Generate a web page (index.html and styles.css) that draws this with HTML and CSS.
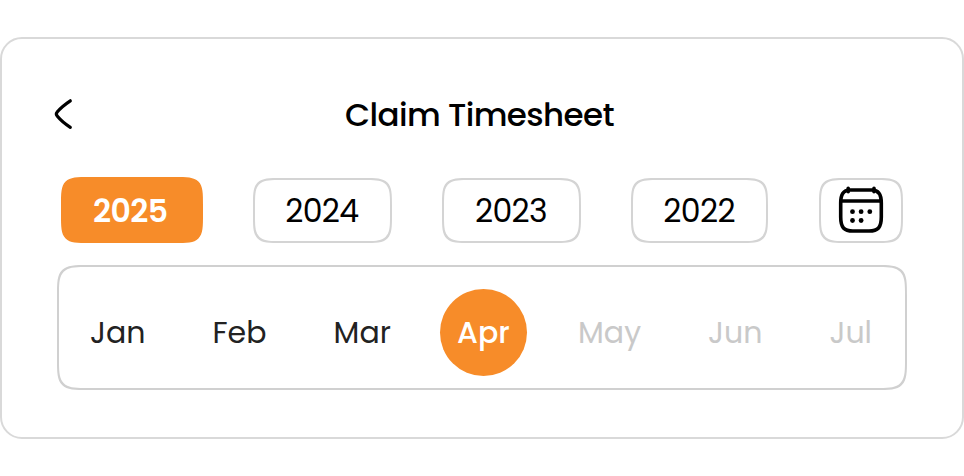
FILE: index.html
```html
<!DOCTYPE html>
<html lang="en">
<head>
    <meta charset="UTF-8">
    <title>Claim Timesheet</title>
    <link rel="stylesheet" href="styles.css">
</head>
<body>
    <div class="card">
        <div class="header">
            <svg class="back" width="22" height="34" viewBox="0 0 22 34" fill="none" stroke="#000" stroke-width="3.2" stroke-linecap="round" stroke-linejoin="round">
                <path d="M18.300 3.800 C12 8 8 11.500 5.200 15 Q3.500 17 5.200 19 C8 22.500 12 26.200 18.300 30.300"/>
            </svg>
            <h1>Claim Timesheet</h1>
        </div>

        <div class="years">
            <div class="year active">2025</div>
            <div class="year">2024</div>
            <div class="year">2023</div>
            <div class="year last">2022</div>
            <div class="calendar">
                <svg width="46" height="48" viewBox="0 0 46 48" fill="none" stroke="#000" stroke-width="3.6">
                    <path d="M12 4 H34 C41 4 43.300 9 43.300 17 V31 C43.300 41.500 40 45 31 45 H15 C6 45 2.700 41.500 2.700 31 V17 C2.700 9 5 4 12 4 Z"/>
                    <path d="M2.700 15 H43.300"/>
                    <path d="M10.200 2.200 V5.800 M36 2.200 V5.800" stroke-linecap="round"/>
                    <g fill="#000" stroke="none">
                        <circle cx="14.500" cy="25.700" r="2.400"/>
                        <circle cx="23.100" cy="25.700" r="2.400"/>
                        <circle cx="31.800" cy="25.700" r="2.400"/>
                        <circle cx="14.500" cy="34.500" r="2.400"/>
                        <circle cx="23.100" cy="34.500" r="2.400"/>
                    </g>
                </svg>
            </div>
        </div>

        <div class="months">
            <span class="month">Jan</span>
            <span class="month">Feb</span>
            <span class="month">Mar</span>
            <span class="month selected">Apr</span>
            <span class="month disabled">May</span>
            <span class="month disabled">Jun</span>
            <span class="month disabled">Jul</span>
        </div>
    </div>
</body>
</html>
```
FILE: styles.css
```css
* {
    box-sizing: border-box;
}

body {
    margin: 0;
    padding-top: 37px;
    background-color: #fff;
    font-family: Poppins, Inter, sans-serif;
}

.card {
    height: 402px;
    padding: 52px 55px 0;
    border: 2px solid #d9d9d9;
    border-radius: 22px;
}

.header {
    display: flex;
    align-items: center;
    height: 46px;
    margin-left: -5px;
}

h1 {
    width: 270px;
    margin: 0 0 0 271px;
    padding-top: 2px;
    font-size: 32.5px;
    font-weight: 500;
    letter-spacing: -0.6px;
    white-space: nowrap;
}

.years {
    display: flex;
    align-items: flex-end;
    justify-content: space-between;
    height: 66px;
    margin: 40px 4.5px 0 4px;
}

.year,
.calendar {
    display: flex;
    align-items: center;
    justify-content: center;
    width: 138.5px;
    height: 65px;
    border: 2px solid #d4d4d4;
    border-radius: 29px;
    corner-shape: squircle;
}

.year {
    padding: 1px 1px 0 0;
    font-size: 31.5px;
    letter-spacing: -0.6px;
    color: #000;
}

.year.active {
    width: 141.5px;
    height: 66px;
    padding: 2px 3px 0 0;
    border: none;
    background-color: #f78c29;
    color: #fff;
    font-weight: 600;
}

.year.last {
    width: 136.5px;
}

.calendar {
    width: 84px;
    padding-bottom: 1px;
}

.months {
    display: flex;
    align-items: center;
    justify-content: space-between;
    height: 125px;
    margin-top: 22px;
    padding: 9px 33px 0 31px;
    border: 2px solid #d0d0d0;
    border-radius: 32px;
    corner-shape: squircle;
    line-height: 87px;
}

.month {
    font-size: 30px;
    color: #222;
}

.month.selected {
    width: 87px;
    height: 87px;
    margin: 0 -16px 0 -18px;
    border-radius: 50%;
    background-color: #f78c29;
    color: #fff;
    font-weight: 500;
    text-align: center;
}

.month.disabled {
    color: #c9c9c9;
}
```
